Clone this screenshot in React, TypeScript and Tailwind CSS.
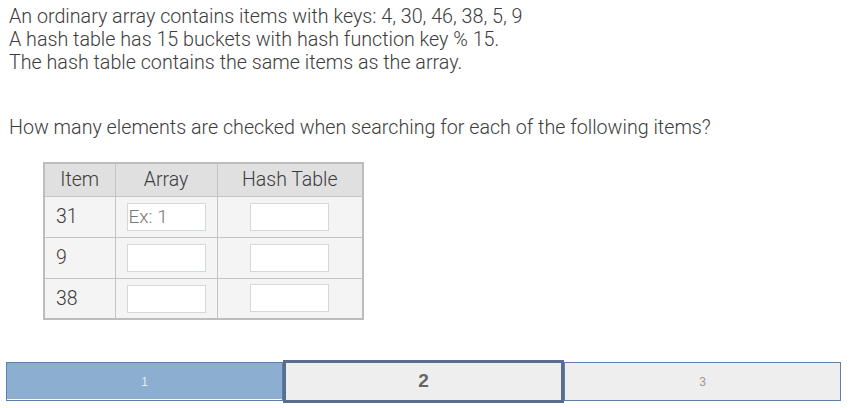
import React from 'react';

const rows = [
  { item: '31', placeholder: 'Ex: 1' },
  { item: '9', placeholder: '' },
  { item: '38', placeholder: '' },
];

const App: React.FC = () => {
  return (
    <div className="w-[859px] h-[408px] bg-white overflow-hidden font-['Roboto',sans-serif] text-[#3c3c3c]">
      {/* Question text */}
      <div className="pl-[9px] pt-[5px] text-[19.7px] font-light leading-[23px]">
        <p>An ordinary array contains items with keys: 4, 30, 46, 38, 5, 9</p>
        <p>A hash table has 15 buckets with hash function key % 15.</p>
        <p>The hash table contains the same items as the array.</p>
        <p className="mt-[42px]">How many elements are checked when searching for each of the following items?</p>
      </div>

      {/* Answer table */}
      <table className="ml-[43px] mt-[23px] border-collapse border-2 border-[#bdbdbd] text-[19.5px] font-light">
        <thead>
          <tr className="bg-[#e0e0e0] h-[33px]">
            <th className="w-[71px] border border-[#c4c4c4] font-light">Item</th>
            <th className="w-[102px] border border-[#c4c4c4] font-light">Array</th>
            <th className="w-[146px] border border-[#c4c4c4] font-light">Hash Table</th>
          </tr>
        </thead>
        <tbody>
          {rows.map((r) => (
            <tr key={r.item} className="bg-[#f4f4f4] h-[41px]">
              <td className="border border-[#c4c4c4] pl-[11px]">{r.item}</td>
              <td className="border border-[#c4c4c4] text-center">
                <input
                  placeholder={r.placeholder}
                  className="w-[79px] h-[28px] bg-white border border-[#d3d8dd] px-[1px] text-[19px] font-light outline-none placeholder:text-[#777]"
                />
              </td>
              <td className="border border-[#c4c4c4] text-center">
                <input className="w-[79px] h-[28px] bg-white border border-[#d3d8dd] outline-none" />
              </td>
            </tr>
          ))}
        </tbody>
      </table>

      {/* Level progress */}
      <div className="ml-[6px] mt-[42px] w-[835px] h-[39px] flex font-['Liberation_Sans',sans-serif]">
        <div className="flex-1 bg-[#8caed0] border border-[#5b80ab] shadow-[inset_0_-1px_0_#ffffff] flex items-center justify-center text-[12px] text-[#e4ecf4]">
          1
        </div>
        <div className="flex-1 bg-[#eeeeee] border-[3px] border-[#5a6e8c] -my-[2px] flex items-center justify-center text-[19px] font-bold text-[#666]">
          2
        </div>
        <div className="flex-1 bg-[#eeeeee] border border-[#5b80ab] flex items-center justify-center text-[12px] text-[#999]">
          3
        </div>
      </div>
    </div>
  );
};

export default App;
